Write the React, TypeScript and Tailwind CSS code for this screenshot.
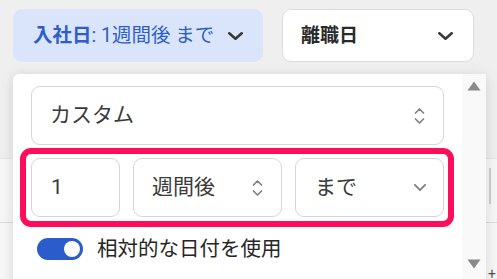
import React from "react";

const FONT = { fontFamily: 'Roboto, "Noto Sans CJK JP", "Noto Sans", sans-serif' };

function ChevronDown({ className = "", w = 14, h = 8, sw = 2.4, color = "#333" }: { className?: string; w?: number; h?: number; sw?: number; color?: string }) {
  return (
    <svg width={w} height={h} viewBox={`0 0 ${w} ${h}`} className={className} fill="none">
      <path d={`M${sw / 2} ${sw / 2} L${w / 2} ${h - sw / 2} L${w - sw / 2} ${sw / 2}`} stroke={color} strokeWidth={sw} strokeLinecap="round" strokeLinejoin="round" />
    </svg>
  );
}

function UpDown() {
  return (
    <svg width="11" height="18" viewBox="0 0 11 18" fill="none">
      <path d="M1.5 6 L5.5 2 L9.5 6" stroke="#808080" strokeWidth="1.7" strokeLinecap="round" strokeLinejoin="round" />
      <path d="M1.5 12 L5.5 16 L9.5 12" stroke="#808080" strokeWidth="1.7" strokeLinecap="round" strokeLinejoin="round" />
    </svg>
  );
}

export default function App() {
  return (
    <div className="relative w-[497px] h-[279px] overflow-hidden bg-[#efefef] flex flex-col" style={FONT}>
      {/* header filters */}
      <div className="flex items-start pl-[13px] pt-[9px] h-[158px] shrink-0">
        <div className="w-[250px] h-[53px] rounded-[9px] bg-[#dae5fc] flex items-center pl-[20px] pr-[20px]">
          <span className="text-[19.5px] text-[#2d5ec8] leading-none">
            <span className="font-bold">入社日</span>: 1週間後 まで
          </span>
          <ChevronDown className="ml-auto" w={15} h={8} sw={2.6} color="#383838" />
        </div>
        <div className="ml-[19px] w-[192px] h-[53px] rounded-[9px] bg-white border border-[#dcdcdc] flex items-center pl-[18px] pr-[20px]">
          <span className="text-[19px] font-bold text-[#2a2a2a] leading-none">離職日</span>
          <ChevronDown className="ml-auto" w={15} h={8} sw={2.6} color="#383838" />
        </div>
      </div>
      {/* background table */}
      <div className="flex-1 bg-[#f6f6f7] border-t border-[#e6e6e6] flex flex-col">
        <div className="h-[64px] border-b border-[#d9d9d9] flex justify-end items-start pr-[6px] pt-[9px]">
          <div className="w-[2px] h-[36px] bg-[#cfcfcf]" />
        </div>
        <div className="flex-1 flex justify-end items-end pr-[1px]">
          <span className="text-[14px] leading-[10px] text-[#555]">+</span>
        </div>
      </div>

      {/* popover */}
      <div className="absolute left-[13px] top-[74px] w-[473px] h-[240px] bg-white rounded-[6px] shadow-[0_2px_14px_rgba(0,0,0,0.13)] flex">
        <div className="flex-1 flex flex-col px-[7px] pt-[12px]">
          <div className="mx-[11px] h-[59px] rounded-[9px] border border-[#d6d6d6] flex items-center pl-[18px] pr-[18px]">
            <span className="text-[21px] text-[#3a3a3a] leading-none">カスタム</span>
            <span className="ml-auto"><UpDown /></span>
          </div>
          <div className="mt-[3px] w-[434px] h-[79px] rounded-[11px] border-[6px] border-[#fe0e5a] flex items-center gap-[13px] pl-[5px] pr-[4px]">
            <div className="w-[89px] h-[59px] rounded-[9px] border border-[#d6d6d6] flex items-center pl-[19px]">
              <span className="text-[21px] text-[#3a3a3a] leading-none">1</span>
            </div>
            <div className="w-[149px] h-[59px] rounded-[9px] border border-[#d6d6d6] flex items-center pl-[18px] pr-[18px]">
              <span className="text-[21px] text-[#3a3a3a] leading-none">週間後</span>
              <span className="ml-auto"><UpDown /></span>
            </div>
            <div className="w-[149px] h-[59px] rounded-[9px] border border-[#d6d6d6] flex items-center pl-[19px] pr-[17px]">
              <span className="text-[21px] text-[#3a3a3a] leading-none">まで</span>
              <ChevronDown className="ml-auto" w={12} h={7} sw={1.8} color="#808080" />
            </div>
          </div>
          <div className="mt-[11px] flex items-center pl-[17px]">
            <div className="w-[46px] h-[22px] rounded-full bg-[#2a5ccb] flex items-center justify-end pr-[3px]">
              <div className="w-[16px] h-[16px] rounded-full bg-white" />
            </div>
            <span className="ml-[14px] text-[20.5px] text-[#262626] leading-none">相対的な日付を使用</span>
          </div>
        </div>
        {/* scrollbar */}
        <div className="w-[24px] bg-[#f9f9f9] flex flex-col items-center justify-between pt-[7px] pb-[45px]">
          <svg width="14" height="10" viewBox="0 0 14 10"><path d="M7 0.5 L13.5 9.5 L0.5 9.5 Z" fill="#8a8a8a" /></svg>
          <svg width="14" height="10" viewBox="0 0 14 10"><path d="M0.5 0.5 L13.5 0.5 L7 9.5 Z" fill="#8a8a8a" /></svg>
        </div>
      </div>
    </div>
  );
}
